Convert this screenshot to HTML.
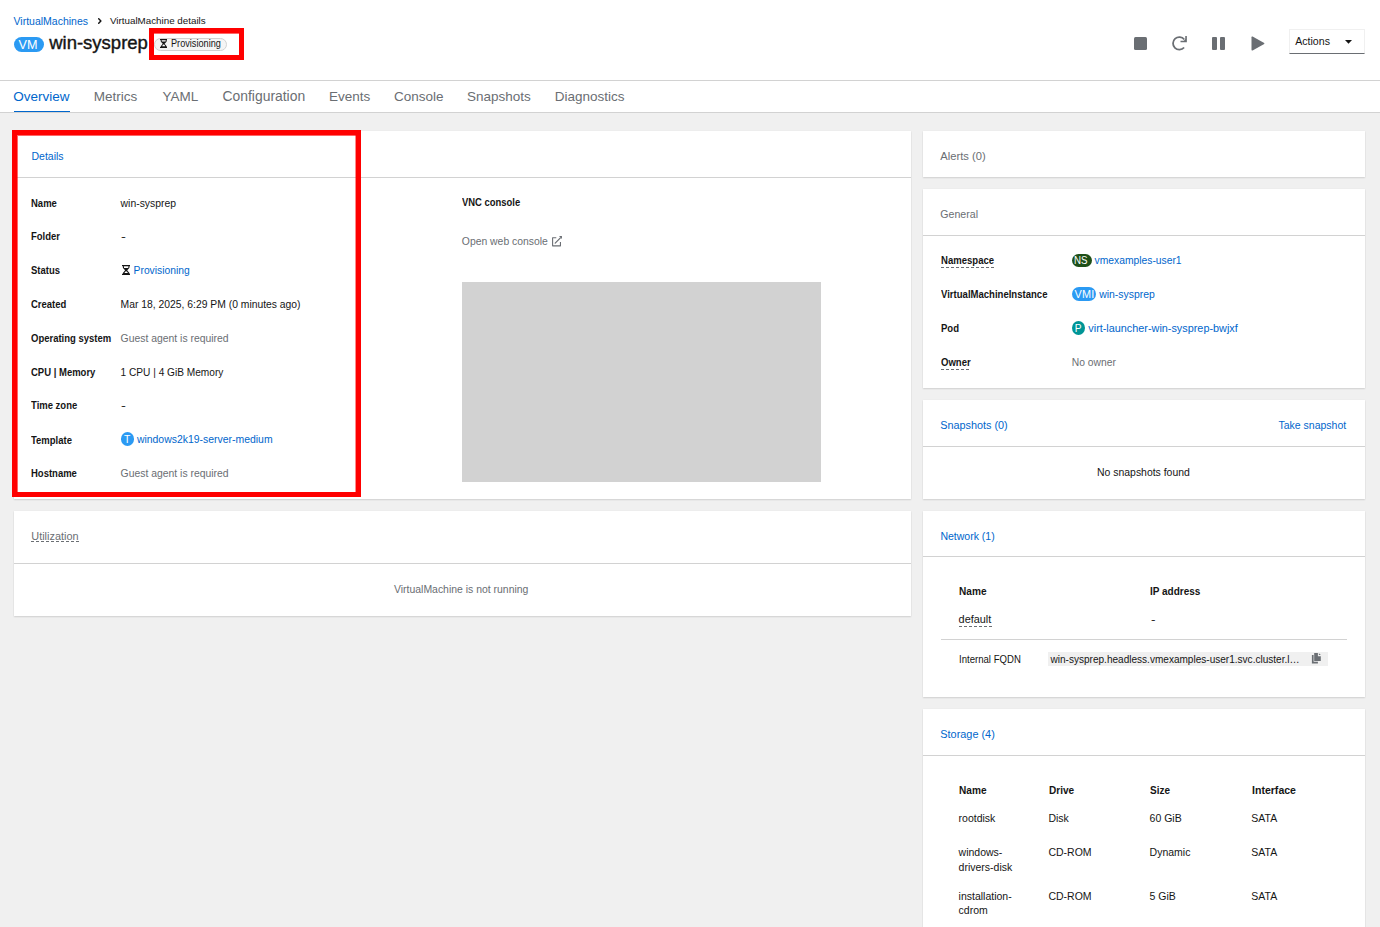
<!DOCTYPE html>
<html><head><meta charset="utf-8"><style>
html,body{margin:0;padding:0}
body{width:1380px;height:927px;overflow:hidden;background:#f0f0f0;position:relative;font-family:"Liberation Sans",sans-serif}
.t{position:absolute;line-height:1;white-space:nowrap}
.r{position:absolute}
</style></head><body>
<div class="r" style="left:0px;top:0px;width:1380px;height:80px;background:#fff"></div>
<div class="r" style="left:0px;top:80px;width:1380px;height:1px;background:#d2d2d2"></div>
<div class="r" style="left:0px;top:81px;width:1380px;height:31px;background:#fff"></div>
<div class="r" style="left:0px;top:112px;width:1380px;height:1px;background:#d2d2d2"></div>
<div class="t" style="left:13.50px;top:16px;font-size:10.5px;color:#0066cc;font-weight:400;">VirtualMachines</div>
<svg class="r" style="left:92px;top:14px" width="16" height="14" viewBox="0 0 16 14"><path d="M6.7 4.7 L8.9 6.9 L6.7 9.2" fill="none" stroke="#151515" stroke-width="1.45" stroke-linecap="round" stroke-linejoin="round"/></svg>
<div class="t" style="left:110.00px;top:16px;font-size:9.8px;color:#151515;font-weight:400;">VirtualMachine details</div>
<div class="r" style="left:14px;top:37px;width:30px;height:15px;background:#2b9af3;border-radius:8px"></div>
<div class="t" style="left:18.60px;top:39px;font-size:12.6px;color:#fff;font-weight:400;">VM</div>
<div class="t" style="left:49.20px;top:34px;font-size:18.5px;color:#151515;font-weight:400;-webkit-text-stroke:0.4px #151515;">win-sysprep</div>
<div class="r" style="left:154px;top:38px;width:73px;height:13px;box-sizing:border-box;border:1px solid #d2d2d2;border-radius:7px;background:#f5f5f5"></div>
<svg class="r" style="left:159.8px;top:38.9px" width="7.4" height="9" viewBox="0 0 8.3 10" preserveAspectRatio="none"><path d="M0 0H8.3V1.1H7.7L7.3 3L5.2 5.3L7.4 8L7.8 8.9H8.3V10H0V8.9H0.5L0.9 8L3.1 5.3L1 3L0.6 1.1H0Z" fill="#151515"/><path d="M1.8 1.3H6.5L6.2 2.9H2.1Z" fill="#fff"/><path d="M2.5 8.1C2.8 6.9 3.5 6.2 4.15 6.2C4.8 6.2 5.5 6.9 5.8 8.1Z" fill="#fff"/></svg>
<div class="t" style="left:170.60px;top:39px;font-size:10.0px;color:#151515;font-weight:400;transform:scaleX(0.915);transform-origin:0 0;">Provisioning</div>
<div class="r" style="left:149px;top:28px;width:95px;height:32px;box-sizing:border-box;border:5px solid #ff0000;box-shadow:inset 0 1px 0 rgba(255,0,0,.6)"></div>
<div class="r" style="left:1134px;top:37px;width:13px;height:13px;background:#6a6e73;border-radius:1.5px"></div>
<svg class="r" style="left:1168px;top:33px" width="22" height="20" viewBox="0 0 22 20"><path d="M16.3 6.5 A6.3 6.3 0 1 0 16.1 14.5" fill="none" stroke="#6a6e73" stroke-width="1.8"/><path d="M12.5 8.55H18.05V3.0" fill="none" stroke="#6a6e73" stroke-width="1.6"/><path d="M15.2 8.6L18.1 8.6L18.1 5.6Z" fill="#6a6e73"/></svg>
<div class="r" style="left:1212px;top:37px;width:5px;height:13px;background:#6a6e73;border-radius:1px"></div>
<div class="r" style="left:1219.5px;top:37px;width:5.5px;height:13px;background:#6a6e73;border-radius:1px"></div>
<svg class="r" style="left:1251px;top:36px" width="14" height="15" viewBox="0 0 14 15"><path d="M0.5 1.2 Q0.5 0 1.6 0.6 L13.2 7 Q13.6 7.5 13.2 8 L1.6 14.4 Q0.5 15 0.5 13.8 Z" fill="#6a6e73"/></svg>
<div class="r" style="left:1289px;top:29px;width:76px;height:25px;box-sizing:border-box;border:1px solid #f0f0f0;border-bottom:1px solid #6a6e73;background:#fff"></div>
<div class="t" style="left:1295.20px;top:36px;font-size:10.6px;color:#151515;font-weight:400;">Actions</div>
<svg class="r" style="left:1345px;top:40px" width="7" height="4" viewBox="0 0 7 4"><path d="M0 0H7L3.5 3.8Z" fill="#151515"/></svg>
<div class="t" style="left:13.20px;top:90px;font-size:13.5px;color:#0066cc;font-weight:400;">Overview</div>
<div class="t" style="left:93.70px;top:90px;font-size:13.5px;color:#6a6e73;font-weight:400;">Metrics</div>
<div class="t" style="left:162.60px;top:90px;font-size:13.5px;color:#6a6e73;font-weight:400;">YAML</div>
<div class="t" style="left:222.50px;top:90px;font-size:13.9px;color:#6a6e73;font-weight:400;">Configuration</div>
<div class="t" style="left:329.00px;top:90px;font-size:13.5px;color:#6a6e73;font-weight:400;">Events</div>
<div class="t" style="left:394.00px;top:90px;font-size:13.5px;color:#6a6e73;font-weight:400;">Console</div>
<div class="t" style="left:467.00px;top:90px;font-size:13.5px;color:#6a6e73;font-weight:400;">Snapshots</div>
<div class="t" style="left:554.70px;top:90px;font-size:13.5px;color:#6a6e73;font-weight:400;">Diagnostics</div>
<div class="r" style="left:14px;top:111px;width:56px;height:1px;background:#0066cc"></div>
<div class="r" style="left:14px;top:131px;width:897px;height:368px;background:#fff;box-shadow:0 1px 1.5px 0 rgba(3,3,3,.12),0 0 1.5px 0 rgba(3,3,3,.06)"></div>
<div class="r" style="left:14px;top:177px;width:897px;height:1px;background:#d2d2d2"></div>
<div class="r" style="left:14px;top:511px;width:897px;height:105px;background:#fff;box-shadow:0 1px 1.5px 0 rgba(3,3,3,.12),0 0 1.5px 0 rgba(3,3,3,.06)"></div>
<div class="r" style="left:14px;top:563px;width:897px;height:1px;background:#d2d2d2"></div>
<div class="r" style="left:923px;top:131px;width:442px;height:46px;background:#fff;box-shadow:0 1px 1.5px 0 rgba(3,3,3,.12),0 0 1.5px 0 rgba(3,3,3,.06)"></div>
<div class="r" style="left:923px;top:189px;width:442px;height:199px;background:#fff;box-shadow:0 1px 1.5px 0 rgba(3,3,3,.12),0 0 1.5px 0 rgba(3,3,3,.06)"></div>
<div class="r" style="left:923px;top:235px;width:442px;height:1px;background:#d2d2d2"></div>
<div class="r" style="left:923px;top:400px;width:442px;height:99px;background:#fff;box-shadow:0 1px 1.5px 0 rgba(3,3,3,.12),0 0 1.5px 0 rgba(3,3,3,.06)"></div>
<div class="r" style="left:923px;top:446px;width:442px;height:1px;background:#d2d2d2"></div>
<div class="r" style="left:923px;top:511px;width:442px;height:186px;background:#fff;box-shadow:0 1px 1.5px 0 rgba(3,3,3,.12),0 0 1.5px 0 rgba(3,3,3,.06)"></div>
<div class="r" style="left:923px;top:556px;width:442px;height:1px;background:#d2d2d2"></div>
<div class="r" style="left:923px;top:709px;width:442px;height:231px;background:#fff;box-shadow:0 1px 1.5px 0 rgba(3,3,3,.12),0 0 1.5px 0 rgba(3,3,3,.06)"></div>
<div class="r" style="left:923px;top:755px;width:442px;height:1px;background:#d2d2d2"></div>
<div class="t" style="left:31.50px;top:151px;font-size:10.5px;color:#0066cc;font-weight:400;">Details</div>
<div class="t" style="left:31.40px;top:199px;font-size:10.3px;color:#151515;font-weight:700;transform:scaleX(0.922);transform-origin:0 0;">Name</div>
<div class="t" style="left:31.40px;top:232px;font-size:10.3px;color:#151515;font-weight:700;transform:scaleX(0.922);transform-origin:0 0;">Folder</div>
<div class="t" style="left:31.40px;top:266px;font-size:10.3px;color:#151515;font-weight:700;transform:scaleX(0.922);transform-origin:0 0;">Status</div>
<div class="t" style="left:31.40px;top:300px;font-size:10.3px;color:#151515;font-weight:700;transform:scaleX(0.922);transform-origin:0 0;">Created</div>
<div class="t" style="left:31.40px;top:334px;font-size:10.3px;color:#151515;font-weight:700;transform:scaleX(0.922);transform-origin:0 0;">Operating system</div>
<div class="t" style="left:31.40px;top:368px;font-size:10.3px;color:#151515;font-weight:700;transform:scaleX(0.922);transform-origin:0 0;">CPU | Memory</div>
<div class="t" style="left:31.40px;top:401px;font-size:10.3px;color:#151515;font-weight:700;transform:scaleX(0.922);transform-origin:0 0;">Time zone</div>
<div class="t" style="left:31.40px;top:436px;font-size:10.3px;color:#151515;font-weight:700;transform:scaleX(0.922);transform-origin:0 0;">Template</div>
<div class="t" style="left:31.40px;top:469px;font-size:10.3px;color:#151515;font-weight:700;transform:scaleX(0.922);transform-origin:0 0;">Hostname</div>
<div class="t" style="left:120.60px;top:199px;font-size:10.4px;color:#151515;font-weight:400;">win-sysprep</div>
<div class="t" style="left:120.60px;top:232px;font-size:10.4px;color:#151515;font-weight:400;transform:scaleX(1.4);transform-origin:0 0;">-</div>
<svg class="r" style="left:122px;top:264.9px" width="8.3" height="10" viewBox="0 0 8.3 10"><path d="M0 0H8.3V1.1H7.7L7.3 3L5.2 5.3L7.4 8L7.8 8.9H8.3V10H0V8.9H0.5L0.9 8L3.1 5.3L1 3L0.6 1.1H0Z" fill="#151515"/><path d="M1.8 1.3H6.5L6.2 2.9H2.1Z" fill="#fff"/><path d="M2.5 8.1C2.8 6.9 3.5 6.2 4.15 6.2C4.8 6.2 5.5 6.9 5.8 8.1Z" fill="#fff"/></svg>
<div class="t" style="left:133.60px;top:266px;font-size:10.3px;color:#0066cc;font-weight:400;">Provisioning</div>
<div class="t" style="left:120.60px;top:300px;font-size:10.35px;color:#151515;font-weight:400;">Mar 18, 2025, 6:29 PM (0 minutes ago)</div>
<div class="t" style="left:120.60px;top:334px;font-size:10.4px;color:#6a6e73;font-weight:400;">Guest agent is required</div>
<div class="t" style="left:120.60px;top:368px;font-size:10.15px;color:#151515;font-weight:400;">1 CPU | 4 GiB Memory</div>
<div class="t" style="left:120.60px;top:401px;font-size:10.4px;color:#151515;font-weight:400;transform:scaleX(1.4);transform-origin:0 0;">-</div>
<div class="r" style="left:120.8px;top:432px;width:13.399999999999991px;height:13.800000000000011px;background:#2b9af3;border-radius:50%"></div>
<div class="t" style="left:124.00px;top:435px;font-size:10.4px;color:#fff;font-weight:400;">T</div>
<div class="t" style="left:136.90px;top:435px;font-size:10.45px;color:#0066cc;font-weight:400;">windows2k19-server-medium</div>
<div class="t" style="left:120.60px;top:469px;font-size:10.4px;color:#6a6e73;font-weight:400;">Guest agent is required</div>
<div class="t" style="left:462.00px;top:198px;font-size:10.3px;color:#151515;font-weight:700;transform:scaleX(0.917);transform-origin:0 0;">VNC console</div>
<div class="t" style="left:461.80px;top:237px;font-size:10.4px;color:#6a6e73;font-weight:400;">Open web console</div>
<svg class="r" style="left:548px;top:232px" width="18" height="18" viewBox="0 0 18 18"><path d="M8.3 5.8H4.6V13.85H12.45V10.1" fill="none" stroke="#6a6e73" stroke-width="1.1" stroke-linejoin="round"/><path d="M7.2 11.1L12.4 5.9" fill="none" stroke="#6a6e73" stroke-width="1.25" stroke-linecap="round"/><path d="M11.0 4.0H13.95V6.9Z" fill="#6a6e73"/></svg>
<div class="r" style="left:462px;top:282px;width:359px;height:200px;background:#d2d2d2"></div>
<div class="r" style="left:12px;top:130px;width:349px;height:367px;box-sizing:border-box;border:5px solid #ff0000;box-shadow:inset 1px 1px 0 rgba(255,0,0,.6),inset -1px 0 0 rgba(255,0,0,.45)"></div>
<div class="t" style="left:31.30px;top:531px;font-size:10.9px;color:#6a6e73;font-weight:400;">Utilization</div>
<div class="r" style="left:31px;top:541px;width:47.5px;height:1px;background-image:linear-gradient(to right,#6a6e73 58%,transparent 58%);background-size:5px 1px"></div>
<div class="t" style="left:394.00px;top:585px;font-size:10.45px;color:#6a6e73;font-weight:400;">VirtualMachine is not running</div>
<div class="t" style="left:940.30px;top:151px;font-size:11.2px;color:#6a6e73;font-weight:400;">Alerts (0)</div>
<div class="t" style="left:940.30px;top:209px;font-size:10.6px;color:#6a6e73;font-weight:400;">General</div>
<div class="t" style="left:940.50px;top:256px;font-size:10.3px;color:#151515;font-weight:700;transform:scaleX(0.927);transform-origin:0 0;">Namespace</div>
<div class="t" style="left:940.50px;top:290px;font-size:10.3px;color:#151515;font-weight:700;transform:scaleX(0.927);transform-origin:0 0;">VirtualMachineInstance</div>
<div class="t" style="left:940.50px;top:324px;font-size:10.3px;color:#151515;font-weight:700;transform:scaleX(0.927);transform-origin:0 0;">Pod</div>
<div class="t" style="left:940.50px;top:358px;font-size:10.3px;color:#151515;font-weight:700;transform:scaleX(0.927);transform-origin:0 0;">Owner</div>
<div class="r" style="left:940.5px;top:267px;width:53.5px;height:1px;background-image:linear-gradient(to right,#6a6e73 58%,transparent 58%);background-size:5px 1px"></div>
<div class="r" style="left:940.5px;top:369px;width:30.5px;height:1px;background-image:linear-gradient(to right,#6a6e73 58%,transparent 58%);background-size:5px 1px"></div>
<div class="r" style="left:1072px;top:254px;width:20px;height:13px;background:#1e4f18;border-radius:7px"></div>
<div class="t" style="left:1074.00px;top:255px;font-size:10.6px;color:#fff;font-weight:400;transform:scaleX(0.92);transform-origin:0 0;">NS</div>
<div class="t" style="left:1094.60px;top:256px;font-size:10.3px;color:#0066cc;font-weight:400;">vmexamples-user1</div>
<div class="r" style="left:1072px;top:287px;width:24px;height:14px;background:#2b9af3;border-radius:7px"></div>
<div class="t" style="left:1074.60px;top:289px;font-size:10.9px;color:#fff;font-weight:400;letter-spacing:0.2px;">VMI</div>
<div class="t" style="left:1099.20px;top:290px;font-size:10.45px;color:#0066cc;font-weight:400;">win-sysprep</div>
<div class="r" style="left:1072px;top:321px;width:13px;height:14px;background:#009596;border-radius:50%"></div>
<div class="t" style="left:1074.80px;top:324px;font-size:10.2px;color:#fff;font-weight:400;">P</div>
<div class="t" style="left:1088.30px;top:323px;font-size:10.85px;color:#0066cc;font-weight:400;">virt-launcher-win-sysprep-bwjxf</div>
<div class="t" style="left:1071.80px;top:358px;font-size:10.3px;color:#6a6e73;font-weight:400;">No owner</div>
<div class="t" style="left:940.20px;top:420px;font-size:10.85px;color:#0066cc;font-weight:400;">Snapshots (0)</div>
<div class="t" style="left:1278.50px;top:420px;font-size:10.5px;color:#0066cc;font-weight:400;">Take snapshot</div>
<div class="t" style="left:1097.00px;top:468px;font-size:10.45px;color:#151515;font-weight:400;">No snapshots found</div>
<div class="t" style="left:940.40px;top:531px;font-size:10.5px;color:#0066cc;font-weight:400;">Network (1)</div>
<div class="t" style="left:958.80px;top:586px;font-size:10.6px;color:#151515;font-weight:700;transform:scaleX(0.953);transform-origin:0 0;">Name</div>
<div class="t" style="left:1149.90px;top:586px;font-size:10.6px;color:#151515;font-weight:700;transform:scaleX(0.943);transform-origin:0 0;">IP address</div>
<div class="t" style="left:958.60px;top:614px;font-size:10.9px;color:#151515;font-weight:400;">default</div>
<div class="r" style="left:959px;top:626px;width:33px;height:1px;background-image:linear-gradient(to right,#6a6e73 58%,transparent 58%);background-size:5px 1px"></div>
<div class="t" style="left:1150.50px;top:615px;font-size:10.4px;color:#151515;font-weight:400;transform:scaleX(1.3);transform-origin:0 0;">-</div>
<div class="r" style="left:941px;top:639px;width:406px;height:1px;background:#d2d2d2"></div>
<div class="t" style="left:958.80px;top:655px;font-size:10.4px;color:#151515;font-weight:400;transform:scaleX(0.923);transform-origin:0 0;">Internal FQDN</div>
<div class="r" style="left:1048px;top:652px;width:280px;height:14px;background:#f0f0f0"></div>
<div class="t" style="left:1050.50px;top:655px;font-size:10.05px;color:#151515;font-weight:400;">win-sysprep.headless.vmexamples-user1.svc.cluster.l…</div>
<svg class="r" style="left:1308px;top:650px" width="18" height="18" viewBox="0 0 18 18"><path d="M6.2 3.1H9.9V6.3H12.8V10.9H6.2Z" fill="#6a6e73"/><path d="M10.9 3.2L12.8 5.0H10.9Z" fill="#6a6e73"/><path d="M3.9 5.1H5.6V11.8H9.9V13.6H3.9Z" fill="#6a6e73"/></svg>
<div class="t" style="left:940.30px;top:729px;font-size:10.9px;color:#0066cc;font-weight:400;">Storage (4)</div>
<div class="t" style="left:958.80px;top:785px;font-size:10.6px;color:#151515;font-weight:700;transform:scaleX(0.953);transform-origin:0 0;">Name</div>
<div class="t" style="left:1048.60px;top:785px;font-size:10.6px;color:#151515;font-weight:700;transform:scaleX(0.95);transform-origin:0 0;">Drive</div>
<div class="t" style="left:1149.80px;top:785px;font-size:10.6px;color:#151515;font-weight:700;transform:scaleX(0.943);transform-origin:0 0;">Size</div>
<div class="t" style="left:1251.50px;top:785px;font-size:10.6px;color:#151515;font-weight:700;transform:scaleX(0.996);transform-origin:0 0;">Interface</div>
<div class="t" style="left:958.60px;top:813px;font-size:10.5px;color:#151515;font-weight:400;">rootdisk</div>
<div class="t" style="left:1048.40px;top:813px;font-size:10.5px;color:#151515;font-weight:400;">Disk</div>
<div class="t" style="left:1149.60px;top:813px;font-size:10.5px;color:#151515;font-weight:400;">60 GiB</div>
<div class="t" style="left:1251.30px;top:813px;font-size:10.5px;color:#151515;font-weight:400;">SATA</div>
<div class="t" style="left:958.60px;top:847px;font-size:10.5px;color:#151515;font-weight:400;">windows-</div>
<div class="t" style="left:1048.40px;top:847px;font-size:10.5px;color:#151515;font-weight:400;">CD-ROM</div>
<div class="t" style="left:1149.60px;top:847px;font-size:10.5px;color:#151515;font-weight:400;">Dynamic</div>
<div class="t" style="left:1251.30px;top:847px;font-size:10.5px;color:#151515;font-weight:400;">SATA</div>
<div class="t" style="left:958.60px;top:862px;font-size:10.5px;color:#151515;font-weight:400;">drivers-disk</div>
<div class="t" style="left:958.60px;top:891px;font-size:10.5px;color:#151515;font-weight:400;">installation-</div>
<div class="t" style="left:1048.40px;top:891px;font-size:10.5px;color:#151515;font-weight:400;">CD-ROM</div>
<div class="t" style="left:1149.60px;top:891px;font-size:10.5px;color:#151515;font-weight:400;">5 GiB</div>
<div class="t" style="left:1251.30px;top:891px;font-size:10.5px;color:#151515;font-weight:400;">SATA</div>
<div class="t" style="left:958.60px;top:905px;font-size:10.5px;color:#151515;font-weight:400;">cdrom</div>
</body></html>
